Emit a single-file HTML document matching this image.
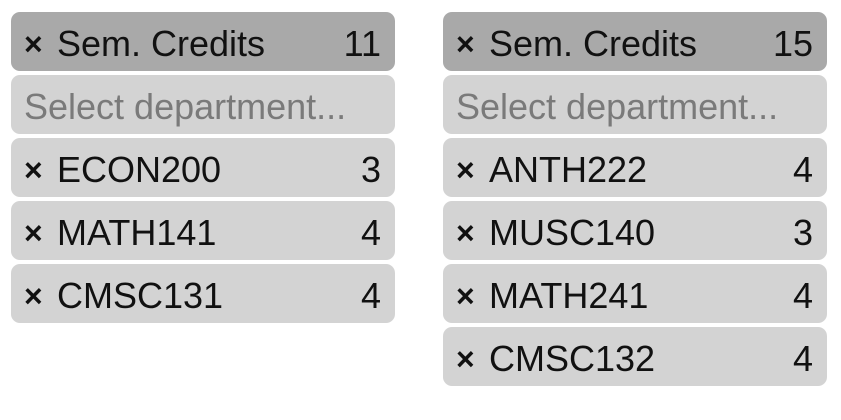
<!DOCTYPE html>
<html><head><style>
html,body{margin:0;padding:0;background:#fff;width:841px;height:420px;overflow:hidden}
body{font-family:"Liberation Sans",sans-serif;position:relative}
.col{position:absolute;top:12px;width:384px}
.row{height:59px;border-radius:9px;background:#d3d3d3;margin-bottom:4px;position:relative;font-size:36px;line-height:64px;color:#111}
.row.h{background:#a9a9a9}
.x{position:absolute;left:13px;font-size:32px;font-weight:bold}
.t{position:absolute;left:46px}
.n{position:absolute;right:14px}
.p{position:absolute;left:13px;color:#7a7a7a}
</style></head><body>
<div class="col" style="left:11px">
<div class="row h"><span class="x">×</span><span class="t">Sem. Credits</span><span class="n">11</span></div>
<div class="row"><span class="p">Select department...</span></div>
<div class="row"><span class="x">×</span><span class="t">ECON200</span><span class="n">3</span></div>
<div class="row"><span class="x">×</span><span class="t">MATH141</span><span class="n">4</span></div>
<div class="row"><span class="x">×</span><span class="t">CMSC131</span><span class="n">4</span></div>
</div>
<div class="col" style="left:443px">
<div class="row h"><span class="x">×</span><span class="t">Sem. Credits</span><span class="n">15</span></div>
<div class="row"><span class="p">Select department...</span></div>
<div class="row"><span class="x">×</span><span class="t">ANTH222</span><span class="n">4</span></div>
<div class="row"><span class="x">×</span><span class="t">MUSC140</span><span class="n">3</span></div>
<div class="row"><span class="x">×</span><span class="t">MATH241</span><span class="n">4</span></div>
<div class="row"><span class="x">×</span><span class="t">CMSC132</span><span class="n">4</span></div>
</div>
</body></html>
